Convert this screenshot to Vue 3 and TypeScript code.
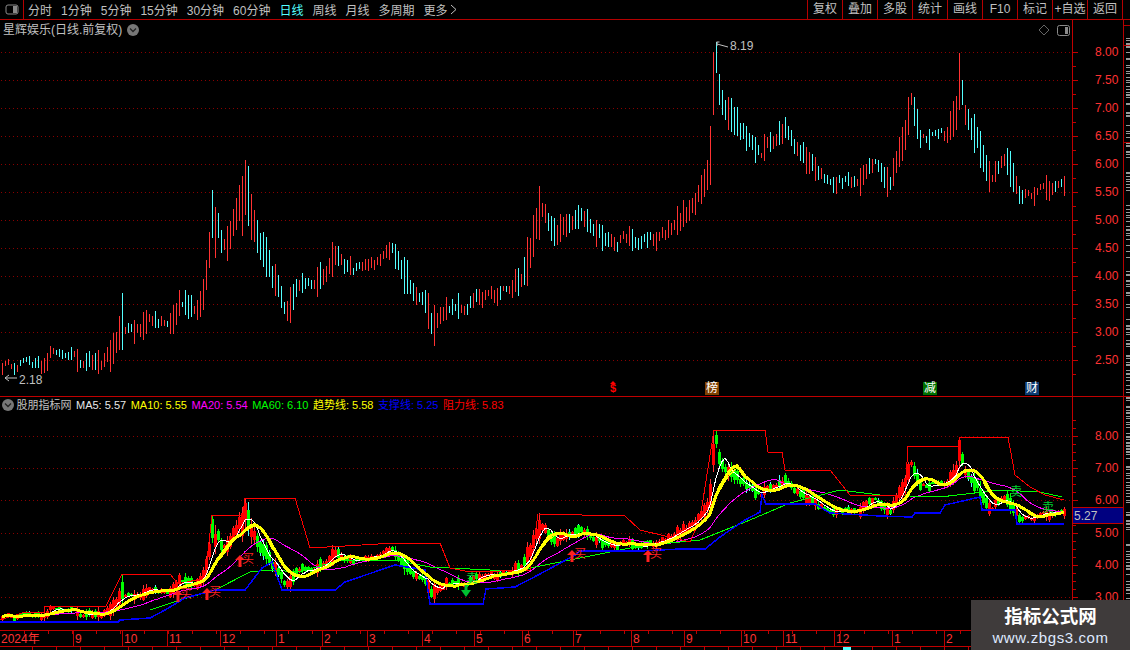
<script setup lang="ts">
type Pt = [number, number]
type Bar = { x: number; y1: number; y2: number; up: boolean; bt: number; bb: number; cyan: boolean }

const tabs = ['分时', '1分钟', '5分钟', '15分钟', '30分钟', '60分钟', '日线', '周线', '月线', '多周期']
const actions = ['复权', '叠加', '多股', '统计', '画线', 'F10', '标记', '+自选', '返回']
const legend = [
  { t: 'MA5: 5.57', c: 'white' },
  { t: 'MA10: 5.55', c: 'yellow' },
  { t: 'MA20: 5.54', c: 'magenta' },
  { t: 'MA60: 6.10', c: 'green' },
  { t: '趋势线: 5.58', c: 'yellow' },
  { t: '支撑线: 5.25', c: 'blue' },
  { t: '阻力线: 5.83', c: 'red' },
]

const path: Pt[] = [
  [0, 368], [20, 366], [45, 368], [50, 356], [70, 356], [100, 366], [112, 352], [122, 328], [135, 333], [150, 318],
  [170, 322], [180, 302], [195, 312], [205, 284], [212, 222], [225, 252], [245, 190], [258, 240], [270, 272], [285, 310],
  [300, 282], [315, 290], [335, 258], [360, 270], [392, 250], [410, 285], [425, 295], [432, 325], [445, 305], [465, 312],
  [480, 295], [510, 290], [525, 272], [540, 205], [555, 232], [575, 215], [590, 225], [612, 245], [630, 236], [655, 241],
  [680, 222], [695, 202], [708, 178], [716, 70], [725, 105], [740, 130], [760, 152], [785, 130], [800, 152], [825, 176],
  [860, 184], [875, 164], [890, 180], [905, 142], [910, 100], [920, 135], [945, 135], [960, 105], [975, 140], [990, 172],
  [1005, 162], [1020, 192], [1040, 190], [1064, 186],
]

function interp(pts: Pt[], x: number): number {
  for (let i = 1; i < pts.length; i++) {
    if (x <= pts[i][0]) {
      const [a, b] = pts[i - 1]
      const [c, d] = pts[i]
      return b + ((d - b) * (x - a)) / (c - a)
    }
  }
  return pts[pts.length - 1][1]
}

let seed = 20240817
function rnd(): number {
  seed = (seed * 1664525 + 1013904223) % 4294967296
  return seed / 4294967296
}

const overrides: Record<number, [number, number, boolean]> = {
  122: [293, 350, false], 212: [190, 238, false], 215: [207, 258, true], 218: [213, 238, false],
  242: [176, 236, true], 245: [160, 215, true], 248: [166, 226, false], 251: [194, 240, true],
  434: [305, 346, true], 539: [186, 240, true], 710: [126, 185, true], 713: [52, 115, true],
  716: [42, 73, false], 719: [74, 105, false], 722: [90, 115, false], 725: [100, 120, false],
  910: [68, 125, true], 959: [53, 110, true], 962: [80, 105, false],
}

const bars: Bar[] = []
const closes: number[] = []
let drift = 0
for (let x = 2; x <= 1064; x += 3) {
  drift = drift * 0.55 + (rnd() - 0.5) * 9
  const mid = interp(path, x) + drift
  const slope = Math.abs(interp(path, x + 3) - interp(path, x - 3)) / 6
  const r = rnd()
  const len = 4 + r * r * 20 + Math.min(26, slope * 7)
  const ov = overrides[x]
  const y1 = ov ? ov[0] : mid - len / 2
  const y2 = ov ? ov[1] : mid + len / 2
  const up = ov ? ov[2] : interp(path, x + 6) < interp(path, x - 3) ? rnd() > 0.15 : rnd() > 0.75
  const h = y2 - y1
  const bt = y1 + h * (0.1 + rnd() * 0.2)
  const bb = y2 - h * (0.1 + rnd() * 0.2)
  bars.push({ x, y1, y2, up, bt, bb, cyan: rnd() > 0.8 })
  closes.push((y1 + y2) / 2 + (up ? -h * 0.2 : h * 0.2))
}

const low = (y: number) => 436 + (y - 52) * 0.575

function topWicks(up: boolean): string {
  return bars.filter((b) => b.up === up).map((b) => `M${b.x} ${b.y1.toFixed(0)}V${b.y2.toFixed(0)}`).join('')
}
function lowWicks(list: Bar[]): string {
  return list.map((b) => `M${b.x} ${low(b.y1).toFixed(0)}V${low(b.y2).toFixed(0)}`).join('')
}
function lowBodies(up: boolean): string {
  return bars
    .filter((b) => b.up === up)
    .map((b) => `M${b.x} ${low(b.bt).toFixed(0)}V${Math.max(low(b.bb), low(b.bt) + 2).toFixed(0)}`)
    .join('')
}
function ma(n: number): string {
  const out: string[] = []
  closes.forEach((_, i) => {
    const s = Math.max(0, i - n + 1)
    const slice = closes.slice(s, i + 1)
    const avg = slice.reduce((a, b) => a + b, 0) / slice.length
    out.push(`${bars[i].x},${low(avg).toFixed(1)}`)
  })
  return out.join(' ')
}
const pts = (p: Pt[]) => p.map((q) => q.join(',')).join(' ')

const topUp = topWicks(true)
const topDown = topWicks(false)
const lowUpW = lowWicks(bars.filter((b) => b.up))
const lowDownW = lowWicks(bars.filter((b) => !b.up && !b.cyan))
const lowCyanW = lowWicks(bars.filter((b) => !b.up && b.cyan))
const lowUpB = lowBodies(true)
const lowDownB = lowBodies(false)
const ma5 = ma(5)
const ma10 = ma(10)
const ma20 = ma(22)
const trend = ma(9)

const ma60 = pts([[150, 610], [180, 600], [215, 590], [250, 572], [270, 570], [300, 572], [340, 560], [395, 560], [430, 567], [490, 570], [520, 570], [580, 558], [640, 546], [700, 540], [750, 520], [790, 503], [840, 490], [880, 495], [940, 497], [1000, 490], [1040, 492], [1062, 497]])
const support = pts([[0, 622], [118, 622], [120, 620], [150, 618], [165, 610], [185, 598], [215, 590], [245, 590], [262, 568], [272, 562], [282, 590], [335, 590], [345, 582], [395, 565], [425, 570], [430, 604], [483, 604], [486, 589], [515, 587], [540, 574], [575, 555], [580, 551], [640, 551], [680, 549], [705, 549], [720, 537], [745, 520], [760, 512], [762, 495], [766, 504], [815, 504], [830, 513], [880, 516], [912, 517], [915, 513], [940, 513], [945, 505], [980, 497], [982, 510], [1015, 510], [1017, 524], [1064, 524]])
const resist = pts([[0, 620], [25, 612], [44, 612], [44, 606], [106, 606], [122, 574], [170, 574], [178, 584], [205, 578], [212, 515], [243, 515], [245, 498], [295, 498], [310, 548], [345, 546], [395, 543], [440, 543], [450, 568], [470, 572], [530, 570], [538, 514], [625, 516], [640, 530], [690, 542], [700, 519], [714, 430], [765, 430], [768, 452], [782, 452], [785, 470], [830, 470], [850, 495], [905, 495], [908, 446], [958, 446], [960, 437], [1008, 437], [1015, 475], [1030, 487], [1045, 495], [1064, 500]])

const topLevels = [8, 7.5, 7, 6.5, 6, 5.5, 5, 4.5, 4, 3.5, 3, 2.5].map((v) => ({ v: v.toFixed(2), y: 52 + (8 - v) * 56 }))
const topMinor = topLevels.map((l) => l.y + 14)
const lowLevels = [8, 7, 6, 5, 4, 3].map((v) => ({ v: v.toFixed(2), y: Math.round(436 + (8 - v) * 32.2) }))
const lowMinor = [...lowLevels.map((l) => l.y - 16), ...lowLevels.map((l) => l.y - 8), ...lowLevels.map((l) => l.y + 8)]

const months = [
  { t: '9', x: 73 }, { t: '10', x: 122 }, { t: '11', x: 167 }, { t: '12', x: 220 }, { t: '1', x: 276 }, { t: '2', x: 322 },
  { t: '3', x: 367 }, { t: '4', x: 422 }, { t: '5', x: 474 }, { t: '6', x: 522 }, { t: '7', x: 573 }, { t: '8', x: 631 },
  { t: '9', x: 684 }, { t: '10', x: 741 }, { t: '11', x: 783 }, { t: '12', x: 834 }, { t: '1', x: 892 }, { t: '2', x: 944 },
]
const timeTicks: number[] = []
for (let x = 24; x < 1072; x += 24) timeTicks.push(x)

const buyMarks = [[178, 590], [207, 588], [240, 555], [572, 550], [648, 550]]
const sellText = [[472, 583], [1016, 496], [1048, 512]]

const stripRows: number[] = []
for (let y = 30; y < 650; y += 1) if (rnd() > 0.55 && y % 3 !== 0) stripRows.push(y)
const stripCuts = [25, 45, 142, 396, 630, 646]
</script>

<template>
  <div class="screen">
    <header class="toolbar">
      <div class="panel-btn">
        <svg width="14" height="11" viewBox="0 0 14 11"><rect x="1" y="1" width="12" height="9" rx="2" fill="none" stroke="#8a8a8a" /><rect x="8" y="2" width="4" height="7" fill="#8a8a8a" /></svg>
      </div>
      <nav class="tabs">
        <span v-for="t in tabs" :key="t" class="tab" :class="{ active: t === '日线' }">{{ t }}</span>
        <span class="tab more">更多
          <svg width="7" height="11" viewBox="0 0 7 11"><path d="M1 1l5 4.5L1 10" fill="none" stroke="#c0c0c0" /></svg>
        </span>
      </nav>
      <div class="actions">
        <span v-for="a in actions" :key="a" class="action">{{ a }}</span>
      </div>
    </header>

    <div class="body">
      <div class="charts">
        <section class="pane pane-top">
          <svg class="plot" width="1072" height="376" viewBox="0 20 1072 376">
            <g class="grid">
              <line v-for="l in topLevels" :key="l.v" x1="1" x2="1072" :y1="l.y + 0.5" :y2="l.y + 0.5" />
            </g>
            <path :d="topUp" class="wick" stroke="#ff3232" />
            <path :d="topDown" class="wick" stroke="#54ffff" />
            <path d="M716.5 42l3 0M717 44l11 3M717 42v4" fill="none" stroke="#c0c0c0" />
            <text x="730" y="50" class="note">8.19</text>
            <path d="M5 378h12M5 378l4-3M5 378l4 3" fill="none" stroke="#c0c0c0" />
            <text x="19" y="384" class="note">2.18</text>
            <text x="613" y="392" class="dollar" text-anchor="middle">$</text>
            <path d="M613 381l-3 3h6z" fill="#ff0000" />
          </svg>
          <svg class="axis" width="51" height="376" viewBox="1072 20 51 376">
            <g class="ticks">
              <line v-for="l in topLevels" :key="l.v" x1="1073" x2="1078" :y1="l.y + 0.5" :y2="l.y + 0.5" />
              <line v-for="y in topMinor" :key="y" x1="1073" x2="1076" :y1="y + 0.5" :y2="y + 0.5" />
            </g>
            <text v-for="l in topLevels" :key="l.v" x="1095" :y="l.y + 4" class="price">{{ l.v }}</text>
          </svg>
          <div class="title">
            星辉娱乐(日线.前复权)
            <svg width="12" height="12" viewBox="0 0 12 12"><circle cx="6" cy="6" r="6" fill="#777" /><path d="M3 4.5l3 3 3-3" fill="none" stroke="#222" stroke-width="1.3" /></svg>
          </div>
          <div class="pane-icons">
            <svg width="12" height="12" viewBox="0 0 12 12"><path d="M6 1l5 5-5 5-5-5z" fill="none" stroke="#666" /></svg>
            <svg width="13" height="11" viewBox="0 0 13 11"><rect x=".5" y=".5" width="12" height="10" rx="2" fill="none" stroke="#8a8a8a" /><rect x="8" y="2" width="3" height="7" fill="#8a8a8a" /></svg>
          </div>
          <span class="flag f-bang">榜</span>
          <span class="flag f-jian">减</span>
          <span class="flag f-cai">财</span>
        </section>

        <section class="pane pane-low">
          <svg class="plot" width="1072" height="233" viewBox="0 397 1072 233">
            <g class="grid">
              <line v-for="l in lowLevels" :key="l.v" x1="1" x2="1072" :y1="l.y + 0.5" :y2="l.y + 0.5" />
            </g>
            <path :d="lowUpW" class="wick" stroke="#ff3232" />
            <path :d="lowDownW" class="wick" stroke="#00ff00" />
            <path :d="lowCyanW" class="wick" stroke="#54ffff" />
            <path :d="lowUpB" class="body-bar" stroke="#ff0000" />
            <path :d="lowDownB" class="body-bar" stroke="#00ff00" />
            <polyline :points="ma20" class="line" stroke="#ff00ff" />
            <polyline :points="ma60" class="line" stroke="#00ff00" />
            <polyline :points="support" class="line thick" stroke="#0000ff" />
            <polyline :points="resist" class="line" stroke="#ff0000" />
            <polyline :points="ma5" class="line" stroke="#ffffff" />
            <polyline :points="ma10" class="line" stroke="#ffff00" />
            <polyline :points="trend" class="line trend" stroke="#ffff00" />
            <g v-for="m in buyMarks" :key="m[0]">
              <path :d="`M${m[0]} ${m[1]}l-5 5h3.500v7h3v-7h3.500z`" fill="#ff2020" />
              <text :x="m[0] + 2" :y="m[1] + 8" class="mark" fill="#ff2020">买</text>
            </g>
            <g v-for="m in sellText" :key="m[0]">
              <text :x="m[0] - 6" :y="m[1]" class="mark" fill="#00d030">卖</text>
            </g>
            <path d="M466 597l-5-7h3.500v-5h3v5h3.500z" fill="#00c030" />
          </svg>
          <svg class="axis" width="51" height="233" viewBox="1072 397 51 233">
            <g class="ticks">
              <line v-for="l in lowLevels" :key="l.v" x1="1073" x2="1078" :y1="l.y + 0.5" :y2="l.y + 0.5" />
              <line v-for="y in lowMinor" :key="y" x1="1073" x2="1076" :y1="y + 0.5" :y2="y + 0.5" />
            </g>
            <text v-for="l in lowLevels" :key="l.v" x="1095" :y="l.y + 4" class="price">{{ l.v }}</text>
            <rect x="1073" y="508" width="50" height="15.500" fill="#000080" />
            <path d="M1073 507.500h50M1073 523.500h50" stroke="#c00000" />
            <text x="1074" y="520" class="current">5.27</text>
          </svg>
          <div class="legend">
            <svg class="legend-icon" width="12" height="12" viewBox="0 0 12 12"><circle cx="6" cy="6" r="6" fill="#777" /><path d="M3 4.5l3 3 3-3" fill="none" stroke="#222" stroke-width="1.3" /></svg>
            <span class="indicator">股朋指标网</span>
            <span v-for="l in legend" :key="l.t" :class="l.c">{{ l.t }}</span>
          </div>
        </section>

        <footer class="timeline">
          <svg width="1123" height="20" viewBox="0 630 1123 20">
            <g class="ticks">
              <line v-for="x in timeTicks" :key="x" :x1="x + 0.5" :x2="x + 0.5" y1="631" y2="634" />
              <line v-for="m in months" :key="m.x + m.t" :x1="m.x + 0.5" :x2="m.x + 0.5" y1="631" y2="646" />
              <line v-for="x in timeTicks" :key="'b' + x" :x1="x + 8.5" :x2="x + 8.5" y1="647" y2="650" />
              <line x1="0" x2="1123" y1="646.500" y2="646.500" />
            </g>
            <text x="1" y="643" class="time">2024年</text>
            <text v-for="m in months" :key="'t' + m.x" :x="m.x + 2" y="643" class="time">{{ m.t }}</text>
            <rect x="843" y="647" width="8" height="3" fill="#54ffff" />
          </svg>
        </footer>
      </div>

      <svg class="strip" width="7" height="630" viewBox="1123 20 7 630">
        <line v-for="y in stripRows" :key="y" x1="1125" x2="1130" :y1="y + 0.5" :y2="y + 0.5" stroke="#9a9a9a" />
        <line v-for="y in stripCuts" :key="'c' + y" x1="1123" x2="1130" :y1="y + 0.5" :y2="y + 0.5" stroke="#b00000" />
      </svg>
    </div>

    <aside class="watermark">
      <strong>指标公式网</strong>
      <span>www.zbgs3.com</span>
    </aside>
  </div>
</template>

<style scoped>
.screen {
  position: relative;
  width: 1130px;
  height: 650px;
  overflow: hidden;
  background: #000;
  color: #c0c0c0;
  font: 12px "Liberation Sans", "Noto Sans CJK SC", sans-serif;
}
svg {
  display: block;
  flex: none;
}
.toolbar {
  display: flex;
  height: 19px;
  border-bottom: 1px solid #b40000;
  align-items: stretch;
}
.panel-btn {
  width: 23px;
  border-right: 1px solid #b40000;
  display: flex;
  align-items: center;
  justify-content: center;
}
.tabs {
  display: flex;
  gap: 9px;
  padding-left: 4px;
  align-items: center;
  flex: 1;
}
.tab {
  white-space: nowrap;
}
.tab.active {
  color: #54ffff;
}
.more {
  display: flex;
  align-items: center;
  gap: 2px;
}
.actions {
  display: flex;
  margin-right: 7px;
  border-right: 1px solid #b40000;
}
.action {
  width: 34px;
  border-left: 1px solid #b40000;
  text-align: center;
  line-height: 18px;
  white-space: nowrap;
}
.body {
  display: flex;
}
.charts {
  width: 1123px;
  display: flex;
  flex-direction: column;
  border-right: 1px solid #b40000;
  margin-right: -1px;
}
.pane {
  position: relative;
  display: flex;
}
.pane-top {
  height: 376px;
  border-bottom: 1px solid #c00000;
}
.pane-low {
  height: 233px;
}
.axis {
  box-shadow: inset 1px 0 0 #c00000;
}
.grid line {
  stroke: #8a0000;
  stroke-dasharray: 1 3;
  shape-rendering: crispEdges;
}
.ticks line {
  stroke: #c00000;
  shape-rendering: crispEdges;
}
.wick {
  fill: none;
  stroke-width: 1;
  shape-rendering: crispEdges;
}
.body-bar {
  fill: none;
  stroke-width: 3;
  shape-rendering: crispEdges;
}
.line {
  fill: none;
  stroke-width: 1;
  shape-rendering: crispEdges;
}
.thick {
  stroke-width: 1.5;
}
.trend {
  stroke-width: 3;
  stroke-linejoin: round;
}
.note {
  fill: #c0c0c0;
  font-size: 12px;
}
.dollar {
  fill: #ff0000;
  font-size: 11px;
  font-weight: 700;
}
.mark {
  font-size: 12px;
}
.price {
  fill: #ff3232;
  font-size: 12px;
}
.current {
  fill: #c0c0c0;
  font-size: 12px;
}
.time {
  fill: #ff3232;
  font-size: 12px;
}
.title {
  position: absolute;
  left: 3px;
  top: 2px;
  display: flex;
  align-items: center;
  gap: 5px;
  white-space: nowrap;
  line-height: 16px;
}
.pane-icons {
  position: absolute;
  left: 1038px;
  top: 4px;
  display: flex;
  gap: 7px;
  align-items: center;
}
.flag {
  position: absolute;
  top: 362px;
  width: 14px;
  height: 13px;
  font-size: 12px;
  line-height: 13px;
  text-align: center;
  color: #fff;
}
.f-bang {
  left: 705px;
  background: #804000;
}
.f-jian {
  left: 923px;
  background: #007000;
}
.f-cai {
  left: 1025px;
  background: #0c3a70;
}
.legend {
  position: absolute;
  left: 2px;
  top: 1px;
  display: flex;
  align-items: center;
  gap: 4.5px;
  font-size: 11px;
  line-height: 14px;
  white-space: nowrap;
}
.legend-icon {
  margin-right: -2px;
}
.indicator {
  color: #c0c0c0;
}
.white { color: #e8e8e8; }
.yellow { color: #ffff00; }
.magenta { color: #ff00ff; }
.green { color: #00ff00; }
.blue { color: #0000ff; }
.red { color: #ff0000; }
.timeline {
  height: 20px;
}
.timeline svg {
  box-shadow: inset 0 1px 0 #c00000;
}
.strip {
  margin-left: 1px;
}
.watermark {
  position: absolute;
  right: 0;
  bottom: 0;
  width: 159px;
  height: 50px;
  background: #3f3b3b;
  color: #fff;
  display: flex;
  flex-direction: column;
  align-items: center;
  justify-content: center;
}
.watermark strong {
  font-size: 18.500px;
  line-height: 25px;
}
.watermark span {
  font-size: 15px;
  line-height: 18px;
  color: #dfeaff;
  letter-spacing: 0.6px;
}
</style>
